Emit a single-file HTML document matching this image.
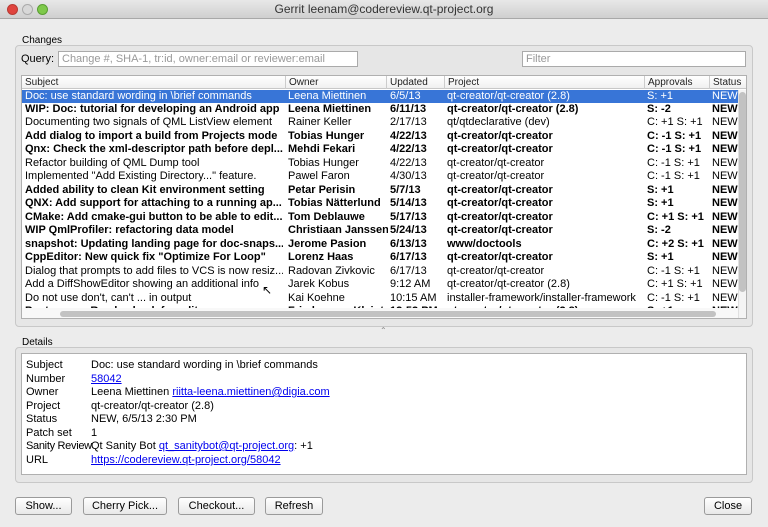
<!DOCTYPE html>
<html><head><meta charset="utf-8"><style>
*{margin:0;padding:0;box-sizing:border-box}
body{width:768px;height:527px;background:#ececec;font-family:"Liberation Sans",sans-serif;font-size:11px;color:#000;position:relative;overflow:hidden}
.a{position:absolute;white-space:nowrap}
.title{left:0;top:0;width:768px;height:19px;background:linear-gradient(#e8e8e8,#cfcfcf);border-bottom:1px solid #a8a8a8;text-align:center;line-height:18px;font-size:12px;color:#333}
.dot{position:absolute;top:4px;width:11px;height:11px;border-radius:50%}
.grp{border:1px solid #c8c8c8;background:#e6e6e6;border-radius:4px}
.inp{background:#fff;border:1px solid #aaa;color:#999;padding-left:3px;line-height:14px;font-size:11px}
.tbl{left:21px;top:75px;width:726px;height:244px;background:#fff;border:1px solid #b0b0b0;overflow:hidden}
.hdr{position:absolute;left:0;top:0;width:726px;height:13px;border-bottom:1px solid #c8c8c8;background:linear-gradient(#fff,#f0f0f0)}
.hdr span{position:absolute;top:0;line-height:13px;font-size:10px;color:#222;padding-left:3px;border-left:1px solid #ccc;height:13px}
.row{position:absolute;left:0;width:716px;height:13.5px;line-height:13.5px}
.row span{position:absolute;top:0;overflow:hidden}
.sel{background:#3875d7;color:#fff}
.b{font-weight:bold}
.btn{top:497px;height:18px;border:1px solid #9a9a9a;border-radius:3px;background:linear-gradient(#fff,#e8e8e8);text-align:center;line-height:16px;font-size:11px}
.dl{left:26px}
.dv{left:91px}
a{color:#0000ee;text-decoration:underline}
</style></head><body>
<div class="a title">Gerrit leenam@codereview.qt-project.org
<div class="dot" style="left:7px;background:#e0443e;border:1px solid #b83a33"></div>
<div class="dot" style="left:22px;background:#d8d8d8;border:1px solid #aaa"></div>
<div class="dot" style="left:37px;background:#7ec94a;border:1px solid #5a9e33"></div>
</div>

<div class="a" style="left:22px;top:35px;font-size:10px">Changes</div>
<div class="a grp" style="left:15px;top:45px;width:738px;height:282px"></div>
<div class="a" style="left:21px;top:53px;font-size:11px">Query:</div>
<div class="a inp" style="left:58px;top:51px;width:300px;height:16px">Change #, SHA-1, tr:id, owner:email or reviewer:email</div>
<div class="a inp" style="left:522px;top:51px;width:224px;height:16px">Filter</div>

<div class="a tbl">
<div class="hdr">
<span style="left:0;border-left:none">Subject</span>
<span style="left:263px">Owner</span>
<span style="left:364px">Updated</span>
<span style="left:422px">Project</span>
<span style="left:622px">Approvals</span>
<span style="left:687px">Status</span>
</div>
<div id="rows"></div>
<div style="position:absolute;left:716px;top:14px;width:9px;height:228px;background:#f4f4f4;border-left:1px solid #e0e0e0"></div>
<div style="position:absolute;left:717px;top:16px;width:7px;height:200px;background:#c2c2c2;border-radius:4px"></div>
<div style="position:absolute;left:0;top:232px;width:716px;height:11px;background:#f8f8f8"></div>
<div style="position:absolute;left:38px;top:235px;width:656px;height:6px;background:#c2c2c2;border-radius:3px"></div>
</div>

<div class="a" style="left:380px;top:326px;font-size:8px;color:#888">⌃</div>

<div class="a" style="left:22px;top:337px;font-size:10px">Details</div>
<div class="a grp" style="left:15px;top:347px;width:738px;height:136px"></div>
<div class="a" style="left:21px;top:353px;width:726px;height:122px;background:#fff;border:1px solid #b0b0b0"></div>
<div class="a dl" style="top:359px">Subject</div><div class="a dv" style="top:359px">Doc: use standard wording in \brief commands</div>
<div class="a dl" style="top:373px">Number</div><div class="a dv" style="top:373px"><a>58042</a></div>
<div class="a dl" style="top:386px">Owner</div><div class="a dv" style="top:386px">Leena Miettinen <a>riitta-leena.miettinen@digia.com</a></div>
<div class="a dl" style="top:400px">Project</div><div class="a dv" style="top:400px">qt-creator/qt-creator (2.8)</div>
<div class="a dl" style="top:413px">Status</div><div class="a dv" style="top:413px">NEW, 6/5/13 2:30 PM</div>
<div class="a dl" style="top:427px">Patch set</div><div class="a dv" style="top:427px">1</div>
<div class="a dl" style="top:440px;letter-spacing:-0.3px">Sanity Review</div><div class="a dv" style="top:440px">Qt Sanity Bot <a>qt_sanitybot@qt-project.org</a>: +1</div>
<div class="a dl" style="top:454px">URL</div><div class="a dv" style="top:454px"><a>https://codereview.qt-project.org/58042</a></div>

<div class="a btn" style="left:15px;width:57px">Show...</div>
<div class="a btn" style="left:83px;width:84px">Cherry Pick...</div>
<div class="a btn" style="left:178px;width:77px">Checkout...</div>
<div class="a btn" style="left:265px;width:58px">Refresh</div>
<div class="a btn" style="left:704px;width:48px">Close</div>

<div class="a" style="left:262px;top:283px;font-size:12px">&#x2196;</div>

<script>
var d=[
[1,0,"Doc: use standard wording in \\brief commands","Leena Miettinen","6/5/13","qt-creator/qt-creator (2.8)","S: +1","NEW"],
[0,1,"WIP: Doc: tutorial for developing an Android app","Leena Miettinen","6/11/13","qt-creator/qt-creator (2.8)","S: -2","NEW"],
[0,0,"Documenting two signals of QML ListView element","Rainer Keller","2/17/13","qt/qtdeclarative (dev)","C: +1 S: +1","NEW"],
[0,1,"Add dialog to import a build from Projects mode","Tobias Hunger","4/22/13","qt-creator/qt-creator","C: -1 S: +1","NEW"],
[0,1,"Qnx: Check the xml-descriptor path before depl...","Mehdi Fekari","4/22/13","qt-creator/qt-creator","C: -1 S: +1","NEW"],
[0,0,"Refactor building of QML Dump tool","Tobias Hunger","4/22/13","qt-creator/qt-creator","C: -1 S: +1","NEW"],
[0,0,"Implemented \"Add Existing Directory...\" feature.","Pawel Faron","4/30/13","qt-creator/qt-creator","C: -1 S: +1","NEW"],
[0,1,"Added ability to clean Kit environment setting","Petar Perisin","5/7/13","qt-creator/qt-creator","S: +1","NEW"],
[0,1,"QNX: Add support for attaching to a running ap...","Tobias Nätterlund","5/14/13","qt-creator/qt-creator","S: +1","NEW"],
[0,1,"CMake: Add cmake-gui button to be able to edit...","Tom Deblauwe","5/17/13","qt-creator/qt-creator","C: +1 S: +1","NEW"],
[0,1,"WIP QmlProfiler: refactoring data model","Christiaan Janssen","5/24/13","qt-creator/qt-creator","S: -2","NEW"],
[0,1,"snapshot: Updating landing page for doc-snaps...","Jerome Pasion","6/13/13","www/doctools","C: +2 S: +1","NEW"],
[0,1,"CppEditor: New quick fix \"Optimize For Loop\"","Lorenz Haas","6/17/13","qt-creator/qt-creator","S: +1","NEW"],
[0,0,"Dialog that prompts to add files to VCS is now resiz...","Radovan Zivkovic","6/17/13","qt-creator/qt-creator","C: -1 S: +1","NEW"],
[0,0,"Add a DiffShowEditor showing an additional info","Jarek Kobus","9:12 AM","qt-creator/qt-creator (2.8)","C: +1 S: +1","NEW"],
[0,0,"Do not use don't, can't ... in output","Kai Koehne","10:15 AM","installer-framework/installer-framework","C: -1 S: +1","NEW"],
[0,1,"Postpone ... Ready check for edit","Friedemann Kleint","12:52 PM","qt-creator/qt-creator (2.8)","S: +1","NEW"]];
var x=[3,266,368,425,625,690],w=[258,100,55,198,63,28],h="";
d.forEach(function(r,i){h+='<div class="row'+(r[0]?' sel':'')+(r[1]?' b':'')+'" style="top:'+(13.5+i*13.47)+'px">';
for(var j=0;j<6;j++)h+='<span style="left:'+x[j]+'px;width:'+w[j]+'px">'+r[j+2].replace(/</g,'&lt;')+'</span>';h+='</div>';});
document.getElementById('rows').innerHTML=h;
</script>
</body></html>
